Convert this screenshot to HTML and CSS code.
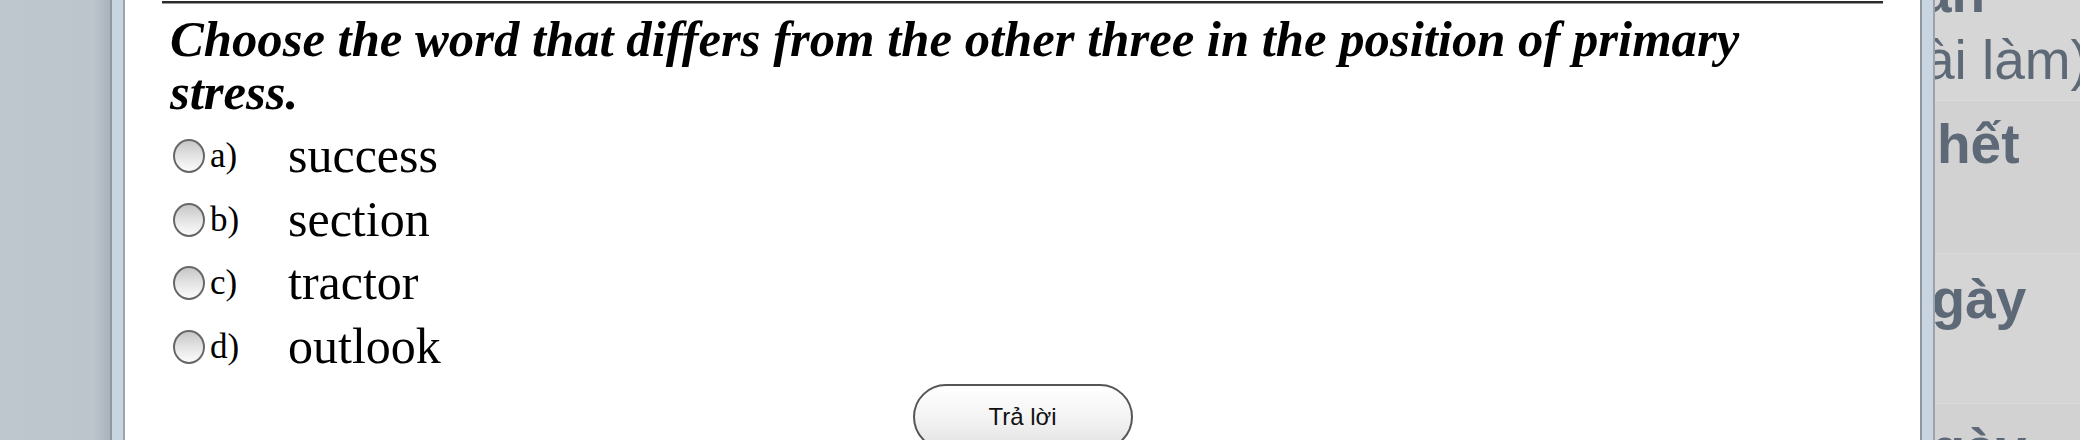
FILE: index.html
```html
<!DOCTYPE html>
<html lang="vi">
<head>
<meta charset="utf-8">
<title>Câu hỏi</title>
<link rel="stylesheet" href="styles.css">
</head>
<body>
<div class="screen">
  <div class="backdrop-left"></div>
  <div class="dialog">
    <div class="frame-edge"></div>
    <div class="dialog-body">
      <div class="rule"></div>
      <div class="question">
        <p class="prompt">Choose the word that differs from the other three in the position of primary stress.</p>
        <ul class="options">
          <li class="option"><span class="radio"></span><span class="letter">a)</span><span class="word">success</span></li>
          <li class="option"><span class="radio"></span><span class="letter">b)</span><span class="word">section</span></li>
          <li class="option"><span class="radio"></span><span class="letter">c)</span><span class="word">tractor</span></li>
          <li class="option"><span class="radio"></span><span class="letter">d)</span><span class="word">outlook</span></li>
        </ul>
        <div class="actions"><button class="submit" type="button">Trả lời</button></div>
      </div>
    </div>
    <div class="frame-edge"></div>
  </div>
  <div class="side-panel">
    <div class="side-row row-1">
      <div class="side-line bold shift-1">ản</div>
      <div class="side-line shift-2">(bài làm)</div>
    </div>
    <div class="side-row row-2">
      <div class="side-line bold shift-3">hết</div>
    </div>
    <div class="side-row row-3">
      <div class="side-line bold shift-4">ngày</div>
    </div>
    <div class="side-row row-4">
      <div class="side-line bold shift-4">ngày</div>
    </div>
  </div>
</div>
</body>
</html>
```

FILE: styles.css
```css
html, body {
  margin: 0;
  padding: 0;
}
body {
  width: 2080px;
  height: 440px;
  overflow: hidden;
  background: #bec6ce;
  font-family: "Liberation Serif", "Times New Roman", serif;
}
.screen {
  display: flex;
  height: 440px;
  width: 2080px;
  overflow: hidden;
}
.backdrop-left {
  width: 110px;
  flex: none;
  background: linear-gradient(to right, #bec6ce 0%, #bcc4cc 85%, #a9b1ba 100%);
}
.dialog {
  display: flex;
  flex: none;
  position: relative;
  z-index: 2;
}
.frame-edge {
  width: 11px;
  flex: none;
  background: #c9d4e1;
  border-left: 2px solid #8e969f;
  border-right: 2px solid #9aa2ab;
}
.dialog-body {
  width: 1795px;
  background: #ffffff;
  overflow: hidden;
}
.rule {
  margin: 1px 37px 0 37px;
  height: 2px;
  background: #2a2a2a;
  box-shadow: 0 1px 0 #9a9a9a;
}
.question {
  padding-left: 45px;
}
.prompt {
  margin: 10.3px 0 0 0;
  width: 1640px;
  font-size: 50.7px;
  line-height: 53px;
  font-weight: bold;
  font-style: italic;
  color: #000;
}
.options {
  list-style: none;
  margin: 5.1px 0 0 0;
  padding: 0 0 0 3px;
}
.option {
  display: flex;
  align-items: center;
  height: 63.5px;
  color: #000;
}
.radio {
  flex: none;
  box-sizing: border-box;
  width: 32px;
  height: 34px;
  border-radius: 50%;
  border: 2px solid #676767;
  background: linear-gradient(to bottom, #c6c6c6 0%, #e4e4e4 50%, #fbfbfb 100%);
}
.letter {
  flex: none;
  width: 78px;
  margin-left: 5px;
  font-size: 35px;
  line-height: 63.5px;
}
.word {
  font-size: 50px;
  line-height: 63.5px;
}
.actions {
  display: flex;
  justify-content: center;
  margin-top: 5.6px;
  margin-left: -45px;
}
.submit {
  box-sizing: border-box;
  width: 220px;
  height: 66px;
  border: 2px solid #555;
  border-radius: 33px;
  background: linear-gradient(to bottom, #ffffff 0%, #f4f4f4 50%, #e2e2e2 100%);
  font-family: "Liberation Sans", Arial, sans-serif;
  font-size: 24px;
  color: #111;
  padding: 0;
}
.side-panel {
  flex: 1;
  position: relative;
  z-index: 1;
  background: #d3d3d3;
  box-shadow: inset 10px 0 10px -8px rgba(0, 0, 0, 0.18);
  font-family: "Liberation Sans", Arial, sans-serif;
  font-size: 55px;
  color: #5e6977;
}
.side-row {
  display: flow-root;
  box-sizing: border-box;
  white-space: nowrap;
}
.row-1 {
  height: 100px;
  background: #d6d6d6;
}
.row-1 .shift-1 {
  margin-top: -39.6px;
}
.row-2 {
  height: 153px;
  padding-top: 10.4px;
  background: #d2d2d2;
  border-top: 1px solid #dadada;
}
.row-3 {
  height: 150px;
  padding-top: 12.4px;
  background: #d5d5d5;
  border-top: 1px solid #dadada;
}
.row-4 {
  height: 100px;
  padding-top: 11.4px;
  background: #d2d2d2;
  border-top: 1px solid #dadada;
}
.side-line {
  line-height: 67px;
}
.bold {
  font-weight: bold;
}
.shift-1 { margin-left: -14px; }
.shift-2 { margin-left: -60px; }
.shift-3 { margin-left: 2px; }
.shift-4 { margin-left: -37px; }
```
